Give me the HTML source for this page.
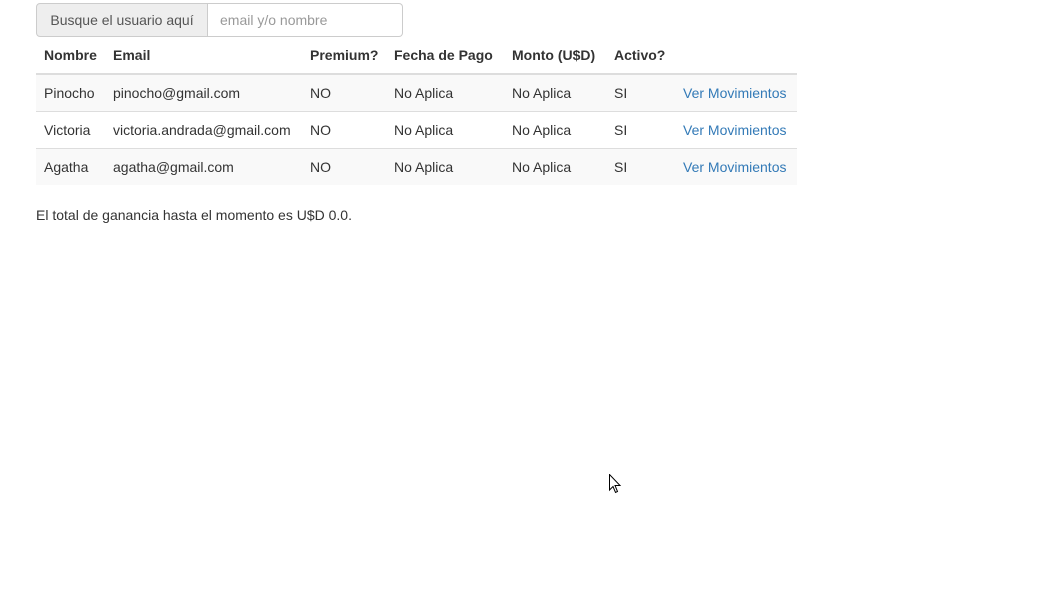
<!DOCTYPE html><html><head><style>
body{margin:0;background:#fff;font-family:"Liberation Sans",sans-serif;font-size:14px;color:#333;}
.ig{position:absolute;left:36px;top:3px;height:34px;display:flex;}
.ad{width:172px;border:1px solid #ccc;border-radius:4px 0 0 4px;background:#eee;line-height:32px;text-align:center;color:#555;box-sizing:border-box;height:34px;}
.in{width:195px;border:1px solid #ccc;border-left:0;border-radius:0 4px 4px 0;line-height:32px;padding-left:12px;color:#999;box-sizing:border-box;height:34px;}
table{position:absolute;left:36px;top:37px;border-collapse:collapse;width:761px;table-layout:fixed;}
th,td{padding:0 8px;text-align:left;white-space:nowrap;}
th{height:36px;border-bottom:2px solid #ddd;font-weight:bold;}
td{height:36px;border-top:1px solid #ddd;}
tr.s td{background:#f9f9f9;}
a{color:#337ab7;text-decoration:none;}
p{position:absolute;left:36px;top:207px;margin:0;}
</style></head><body>
<div class="ig"><div class="ad">Busque el usuario aquí</div><div class="in">email y/o nombre</div></div>
<table>
<colgroup><col style="width:69px"><col style="width:197px"><col style="width:84px"><col style="width:118px"><col style="width:102px"><col style="width:69px"><col style="width:122px"></colgroup>
<tr><th>Nombre</th><th>Email</th><th>Premium?</th><th>Fecha de Pago</th><th>Monto (U$D)</th><th>Activo?</th><th></th></tr>
<tr class="s"><td style="border-top:0">Pinocho</td><td style="border-top:0">pinocho@gmail.com</td><td style="border-top:0">NO</td><td style="border-top:0">No Aplica</td><td style="border-top:0">No Aplica</td><td style="border-top:0">SI</td><td style="border-top:0"><a>Ver Movimientos</a></td></tr>
<tr><td>Victoria</td><td>victoria.andrada@gmail.com</td><td>NO</td><td>No Aplica</td><td>No Aplica</td><td>SI</td><td><a>Ver Movimientos</a></td></tr>
<tr class="s"><td>Agatha</td><td>agatha@gmail.com</td><td>NO</td><td>No Aplica</td><td>No Aplica</td><td>SI</td><td><a>Ver Movimientos</a></td></tr>
</table>
<p>El total de ganancia hasta el momento es U$D 0.0.</p>
<svg style="position:absolute;left:609px;top:474px" width="13" height="20" viewBox="0 0 13 20"><path d="M0.5 0.5 L0.5 16 L4 12.5 L6.5 18.5 L8.5 17.5 L6 11.5 L11 11.5 Z" fill="#fff" stroke="#000" stroke-width="1"/></svg>
</body></html>
